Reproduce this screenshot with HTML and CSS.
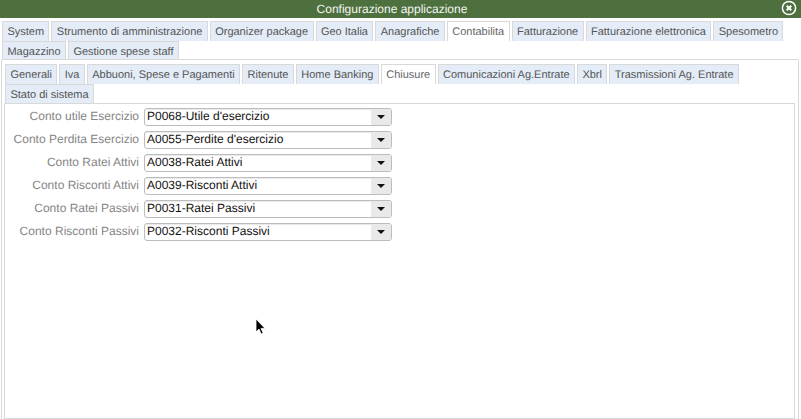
FILE: index.html
```html
<!DOCTYPE html>
<html lang="it">
<head>
<meta charset="utf-8">
<title>Configurazione applicazione</title>
<link rel="stylesheet" href="styles.css">
</head>
<body>
<div class="window">
  <header class="titlebar">
    <span class="title">Configurazione applicazione</span>
    <svg class="close" width="16" height="16" viewBox="0 0 16 16"><circle cx="8" cy="8" r="6.6" fill="none" stroke="#fff" stroke-width="1.5"/><path d="M5.700 5.700l4.600 4.600M10.300 5.700l-4.600 4.600" stroke="#fff" stroke-width="2"/></svg>
  </header>
  <nav class="tabs outer-tabs">
    <a class="tab">System</a><a class="tab">Strumento di amministrazione</a><a class="tab">Organizer package</a><a class="tab">Geo Italia</a><a class="tab">Anagrafiche</a><a class="tab active">Contabilita</a><a class="tab">Fatturazione</a><a class="tab">Fatturazione elettronica</a><a class="tab">Spesometro</a><a class="tab">Magazzino</a><a class="tab">Gestione spese staff</a>
  </nav>
  <section class="panel outer-panel">
    <nav class="tabs inner-tabs">
      <a class="tab">Generali</a><a class="tab">Iva</a><a class="tab">Abbuoni, Spese e Pagamenti</a><a class="tab">Ritenute</a><a class="tab">Home Banking</a><a class="tab active">Chiusure</a><a class="tab">Comunicazioni Ag.Entrate</a><a class="tab">Xbrl</a><a class="tab">Trasmissioni Ag. Entrate</a><a class="tab">Stato di sistema</a>
    </nav>
    <div class="panel inner-panel">
      <div class="form">
        <label class="lbl">Conto utile Esercizio</label><div class="combo"><span class="val">P0068-Utile d'esercizio</span><span class="arrow"></span></div>
        <label class="lbl">Conto Perdita Esercizio</label><div class="combo"><span class="val">A0055-Perdite d'esercizio</span><span class="arrow"></span></div>
        <label class="lbl">Conto Ratei Attivi</label><div class="combo"><span class="val">A0038-Ratei Attivi</span><span class="arrow"></span></div>
        <label class="lbl">Conto Risconti Attivi</label><div class="combo"><span class="val">A0039-Risconti Attivi</span><span class="arrow"></span></div>
        <label class="lbl">Conto Ratei Passivi</label><div class="combo"><span class="val">P0031-Ratei Passivi</span><span class="arrow"></span></div>
        <label class="lbl">Conto Risconti Passivi</label><div class="combo"><span class="val">P0032-Risconti Passivi</span><span class="arrow"></span></div>
      </div>
    </div>
  </section>
</div>
<svg class="cursor" width="12" height="18" viewBox="0 0 12 18"><path d="M1 1v13l3-3 2.200 5 2-1-2.200-4.600h4z" fill="#000" stroke="#fff" stroke-width=".8"/></svg>
</body>
</html>
```
FILE: styles.css
```css
html, body {
  margin: 0;
  height: 100%;
  overflow: hidden;
  background: #fff;
  font-family: "Liberation Sans", Arial, sans-serif;
  font-size: 11px;
  text-rendering: geometricPrecision;
}
.window {
  height: 419px;
  display: flex;
  flex-direction: column;
}
.titlebar {
  height: 18px;
  flex: none;
  box-sizing: border-box;
  padding-right: 17px;
  background: #4e703f;
  position: relative;
  display: flex;
  align-items: center;
  justify-content: center;
  color: #f2f5f0;
  font-size: 12px;
}
.close {
  position: absolute;
  right: 4px;
  top: 0;
}
.tabs {
  display: flex;
  flex-wrap: wrap;
  column-gap: 2px;
  flex: none;
}
.tab {
  box-sizing: border-box;
  height: 20px;
  line-height: 20px;
  padding: 0 4.4px;
  background: #e3ecf7;
  border: 1px solid #d9d9d9;
  border-bottom: 0;
  color: #555;
  white-space: nowrap;
}
.tab.active {
  background: #fff;
  color: #666;
}
.outer-tabs {
  padding: 3px 2px 0 2px;
  height: 42px;
  box-sizing: border-box;
}
.outer-tabs .tab:nth-child(n+10) {
  height: 19px;
  line-height: 20px;
}
.panel {
  border: 1px solid #d9d9d9;
  background: #fff;
}
.outer-panel {
  margin: -1px 2px 0 1px;
  flex: 1;
  display: flex;
  flex-direction: column;
  padding: 4px 3px 0 2px;
  border-bottom: 0;
  border-radius: 2px 2px 0 0;
  min-height: 0;
}
.inner-tabs {
  padding-left: 1px;
}
.inner-tabs .tab:nth-child(n+10) {
  height: 19px;
  line-height: 20px;
}
.inner-panel {
  flex: 1;
  padding: 1px 0 0;
}
.form {
  display: grid;
  grid-template-columns: 134px 248px;
  column-gap: 5px;
  row-gap: 5px;
  align-items: center;
  padding-top: 3px;
}
.lbl {
  text-align: right;
  color: #858585;
  font-size: 12px;
  line-height: 16px;
  padding-bottom: 2px;
  white-space: nowrap;
}
.combo {
  box-sizing: border-box;
  height: 18px;
  border: 1px solid #bdbdbd;
  border-radius: 3px;
  display: flex;
  overflow: hidden;
  box-shadow: inset 0 1px 1px #e8e8e8;
}
.val {
  flex: 1;
  padding-left: 2px;
  line-height: 14px;
  color: #111;
  font-size: 12px;
}
.arrow {
  width: 20px;
  background: #e9e9e9;
  display: flex;
  align-items: center;
  justify-content: center;
}
.arrow::before {
  content: "";
  border-left: 4px solid transparent;
  border-right: 4px solid transparent;
  border-top: 4px solid #111;
}
.cursor {
  position: absolute;
  left: 255px;
  top: 318px;
}
```
